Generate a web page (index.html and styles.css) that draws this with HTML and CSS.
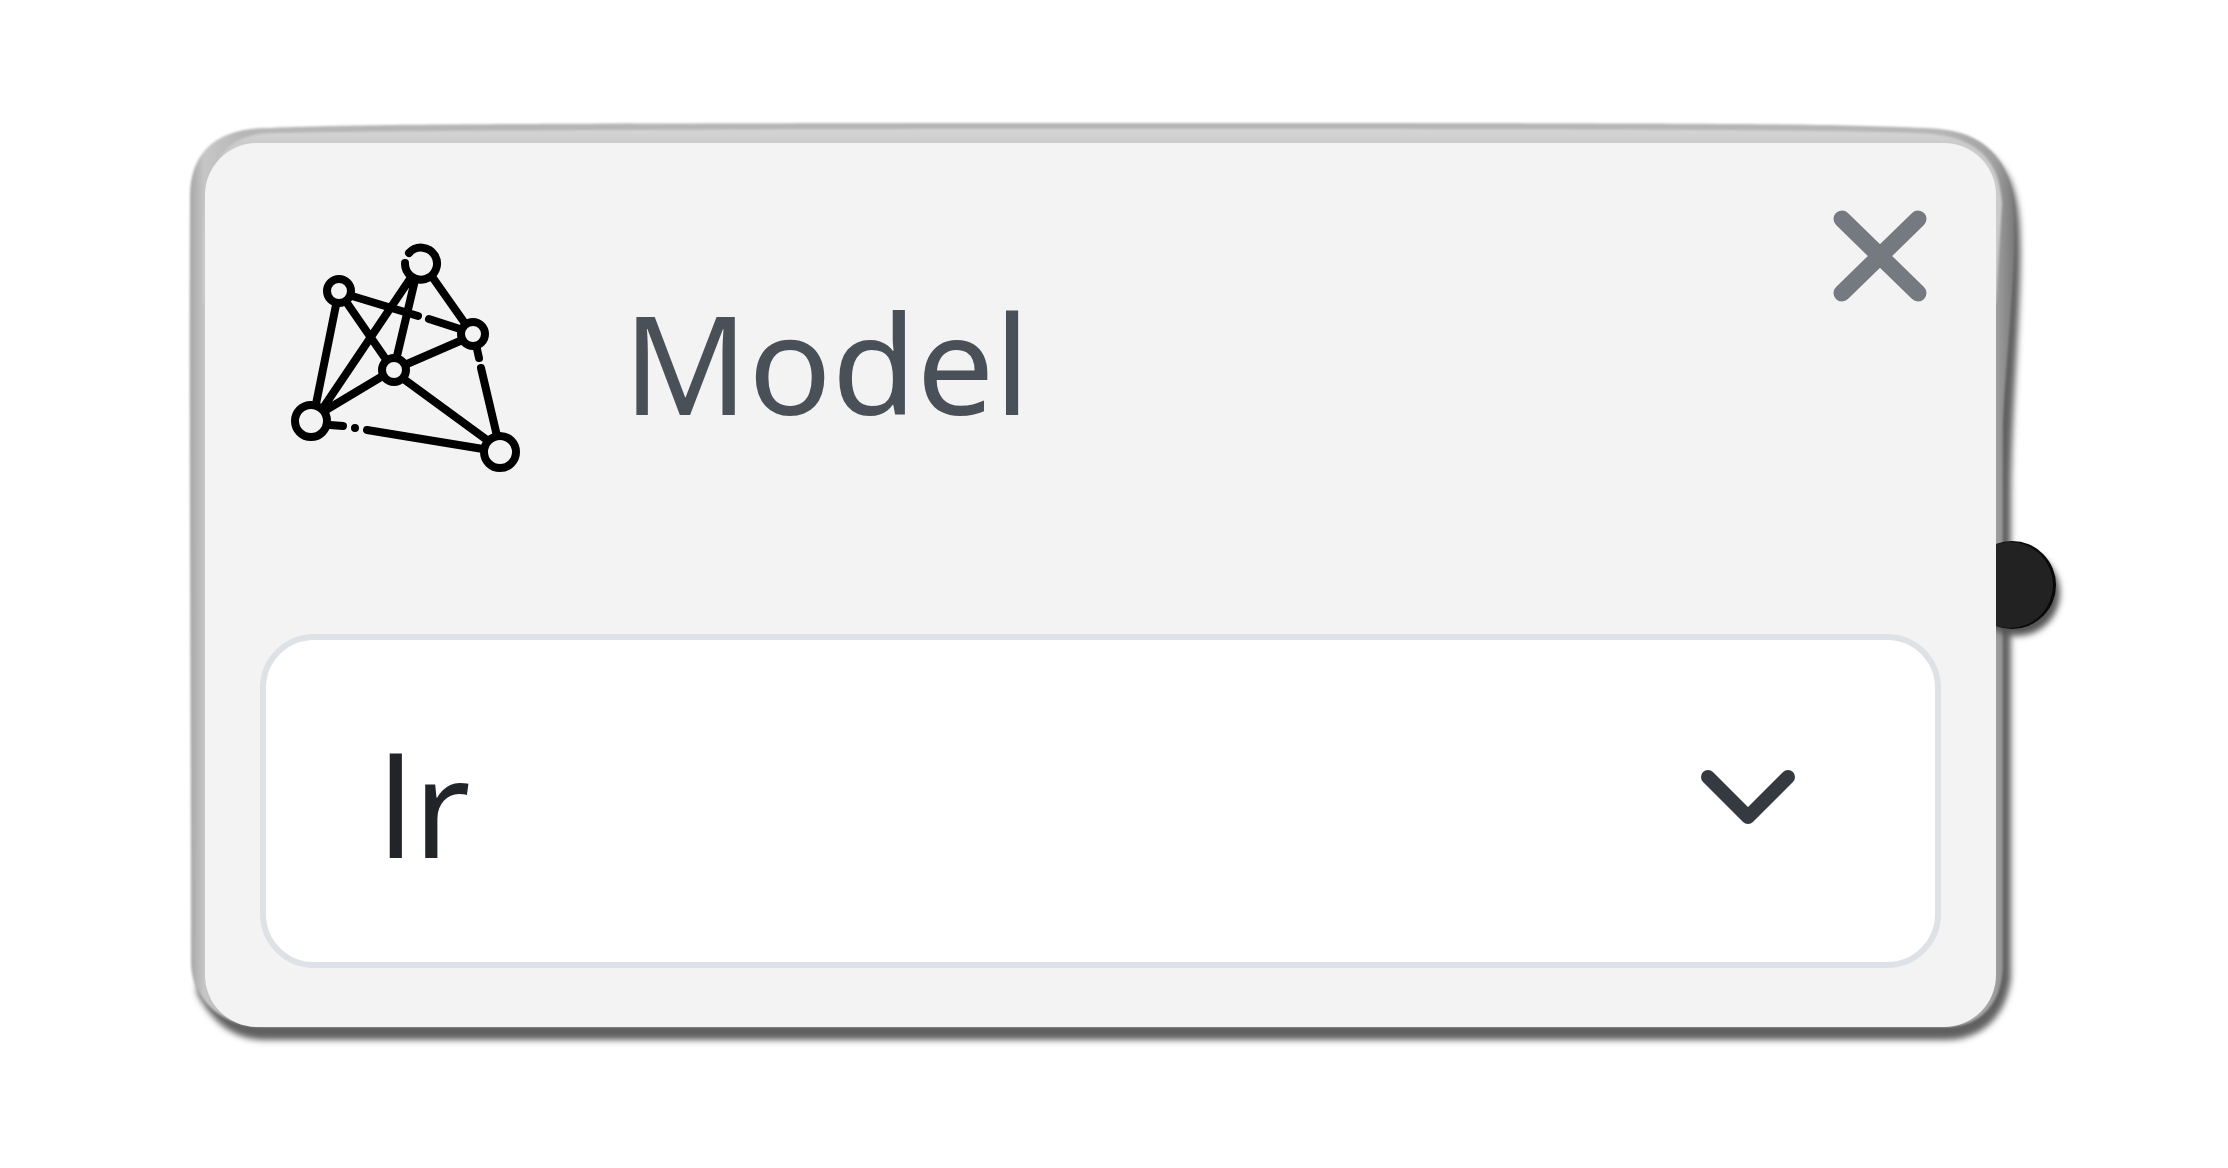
FILE: index.html
```html
<!DOCTYPE html>
<html lang="en">
<head>
    <meta charset="UTF-8">
    <meta name="viewport" content="width=device-width, initial-scale=1.0">
    <title>Model</title>
    <link rel="stylesheet" href="styles.css">
</head>
<body>
    <div class="node">
        <!-- bevel and shadow behind the card -->
        <svg class="node-shell" viewBox="0 0 1791 884" preserveAspectRatio="none" aria-hidden="true">
            <defs>
                <linearGradient id="rim" gradientUnits="userSpaceOnUse" x1="-15" y1="0" x2="1812" y2="0">
                    <stop offset="0" stop-color="#a6a6a6"/>
                    <stop offset="0.008" stop-color="#c6c6c6"/>
                    <stop offset="0.03" stop-color="#b6b6b6"/>
                    <stop offset="0.96" stop-color="#b6b6b6"/>
                    <stop offset="0.988" stop-color="#a0a0a0"/>
                    <stop offset="1" stop-color="#767676"/>
                </linearGradient>
                <linearGradient id="bevel" gradientUnits="userSpaceOnUse" x1="0" y1="-14" x2="0" y2="0">
                    <stop offset="0" stop-color="#d6d6d6"/>
                    <stop offset="1" stop-color="#cbcbcb"/>
                </linearGradient>
                <filter id="soft" x="-20%" y="-20%" width="140%" height="140%">
                    <feGaussianBlur stdDeviation="3"/>
                </filter>
                <filter id="edge" x="-5%" y="-5%" width="110%" height="110%">
                    <feGaussianBlur stdDeviation="1"/>
                </filter>
            </defs>
            <path filter="url(#soft)" fill="#606060" d="M60 0H1740C1785 0 1806 25 1812 60C1822 110 1807 240 1806 350V835C1802 870 1780 897 1740 897H60C25 897 5 875 -8 850Z"/>
            <path filter="url(#edge)" fill="url(#rim)" d="M-15 54C-15 10 10 -14 60 -15C150 -19 300 -20 900 -20C1500 -20 1600 -20 1720 -15C1775 -14 1800 10 1808 54C1814 110 1801 210 1798 280V825C1796 862 1775 884 1740 884H60C10 884 -14 850 -14 820C-14 560 -16 300 -15 54Z"/>
            <path filter="url(#edge)" fill="url(#bevel)" d="M-2 130C-4 10 20 -9 70 -10C200 -13 600 -14 900 -14C1200 -14 1600 -14 1710 -10C1765 -9 1794 10 1797 60L1791 160H-2Z"/>
        </svg>
        <svg class="node-handle" viewBox="0 0 76 124" aria-hidden="true">
            <circle filter="url(#soft)" fill="#555" cx="21" cy="62" r="43"/>
            <circle fill="#080808" cx="16" cy="54" r="44"/>
            <circle fill="#222" cx="14" cy="54" r="43"/>
        </svg>
        <div class="node-card">
            <div class="node-header">
                <svg class="node-icon" viewBox="0 0 230 230" fill="none" stroke="#000" stroke-width="8" stroke-linecap="round" aria-hidden="true">
                    <!-- nodes -->
                    <circle cx="50" cy="48" r="12"/>
                    <circle cx="184" cy="91" r="12"/>
                    <circle cx="105" cy="127" r="12"/>
                    <circle cx="22" cy="178" r="16"/>
                    <circle cx="211" cy="209" r="16"/>
                    <path d="M120 10A16 16 0 1 1 116 20"/>
                    <!-- edges -->
                    <path d="M47 62L27 161M58 60L96 115M63 53L129 73M140 76L171 86M121 36L34 165M126 37L108 113M144 35L175 79M118 121L171 98M37 167L92 134M116 137L198 197M188 106L190 115M192 125L208 193M41 182L54 183M66 185L66 185M78 187L194 206"/>
                </svg>
                <label class="node-title" for="model">Model</label>
                <button class="close-btn" type="button" aria-label="Close">
                    <svg viewBox="0 0 94 92" fill="none" stroke="currentColor" stroke-width="17" stroke-linecap="round" aria-hidden="true">
                        <path d="M9 9L85 83M85 9L9 83"/>
                    </svg>
                </button>
            </div>
            <div class="select-wrap">
                <select class="node-select" id="model">
                    <option value="lr" selected>lr</option>
                </select>
                <svg class="select-arrow" viewBox="0 0 94 56" fill="none" stroke="currentColor" stroke-width="14" stroke-linecap="round" stroke-linejoin="round" aria-hidden="true">
                    <path d="M7 8L47 48L87 8"/>
                </svg>
            </div>
        </div>
    </div>
</body>
</html>
```
FILE: styles.css
```css
* {
    margin: 0;
    padding: 0;
    box-sizing: border-box;
}

body {
    background: #fff;
    padding: 143px 232px 140px 205px;
    font-family: "Noto Sans", "Open Sans", sans-serif;
    font-size: 138px;
    line-height: 188px;
}

.node {
    position: relative;
}

/* bevel */
.node-shell {
    position: absolute;
    top: 0;
    left: 0;
    width: 100%;
    height: 100%;
    overflow: visible;
}

/* output handle, sits on the right edge */
.node-handle {
    position: absolute;
    top: 388px;
    left: 100%;
    width: 76px;
    height: 124px;
}

.node-card {
    position: relative;
    padding: 0 55px 59px;
    border-radius: 52px;
    background: #f3f3f3;
}

.node-header {
    display: flex;
    align-items: flex-start;
    padding: 67px 14px 161px 29px;
}

.node-icon {
    width: 230px;
    height: 230px;
    margin-top: 33px;
    overflow: visible;
}

.node-title {
    margin-top: 57px;
    margin-left: 104px;
    color: #495057;
}

.close-btn {
    width: 94px;
    height: 92px;
    margin-left: auto;
    border: none;
    background: none;
    color: #747a7f;
    cursor: pointer;
}

.close-btn svg {
    display: block;
}

/* dropdown */
.select-wrap {
    display: grid;
    align-items: center;
}

.node-select {
    grid-area: 1 / 1;
    width: 100%;
    height: 334px;
    padding: 6px 240px 0 112px;
    border: 6px solid #dee2e6;
    border-radius: 54px;
    background: #fff;
    color: #212529;
    font: inherit;
    appearance: none;
    cursor: pointer;
}

.select-arrow {
    grid-area: 1 / 1;
    justify-self: end;
    width: 94px;
    height: 56px;
    margin-right: 146px;
    margin-bottom: 8px;
    color: #343a40;
    pointer-events: none;
}
```
